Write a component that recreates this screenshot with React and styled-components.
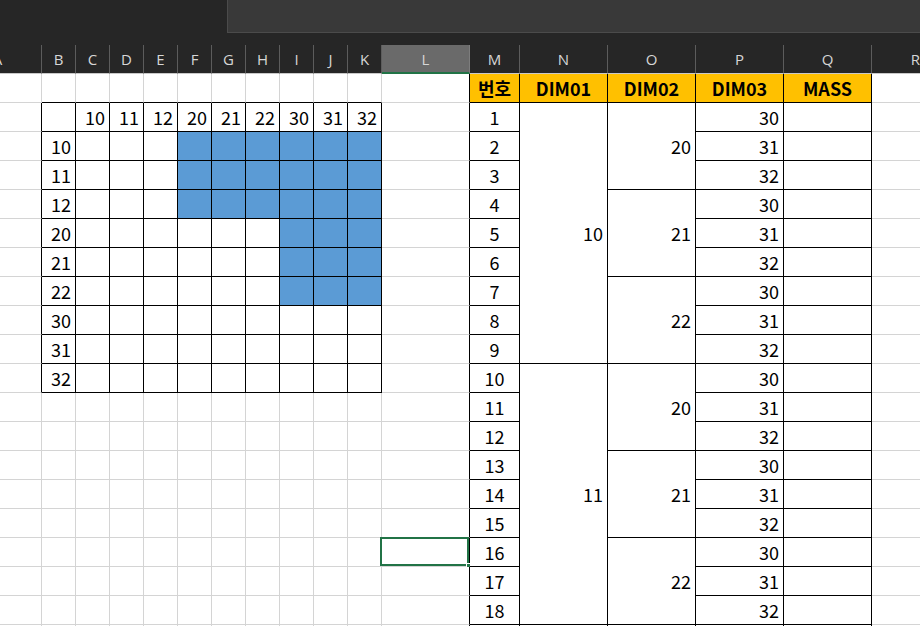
import React from 'react'
import styled, { createGlobalStyle } from 'styled-components'

const COLS = [88, ...Array(10).fill(34), 88, 50, 88, 88, 88, 88, 88]
const LETTERS = 'ABCDEFGHIJKLMNOPQR'.split('')
const AXIS = [10, 11, 12, 20, 21, 22, 30, 31, 32]
const ROWS = 20
const DATA_COUNT = 18
const ACTIVE_COL = 11
const ACTIVE_ROW = 17
const template = COLS.map(w => `${w}px`).join(' ')

const inLeft = (r, c) => r >= 2 && r <= 11 && c >= 1 && c <= 10
const inRight = (r, c) => r >= 1 && r <= ROWS && c >= 12 && c <= 16
const boxed = (r, c) => inLeft(r, c) || inRight(r, c)

const isBlue = (r, c) =>
    (r >= 3 && r <= 5 && c >= 5 && c <= 10) ||
    (r >= 6 && r <= 8 && c >= 8 && c <= 10)

// what one sheet cell holds
function cellAt(r, c) {
    if (inLeft(r, c)) {
        if (r === 2 && c >= 2) return { text: AXIS[c - 2], align: 'end' }
        if (c === 1 && r >= 3) return { text: AXIS[r - 3], align: 'end' }
        return { bg: isBlue(r, c) ? '#5b9bd5' : null }
    }
    if (inRight(r, c)) {
        if (r === 1) {
            return { text: ['번호', 'DIM01', 'DIM02', 'DIM03', 'MASS'][c - 12], align: 'center', bold: true, bg: '#ffc000' }
        }
        const i = r - 2
        // the row under the last one only peeks in at the bottom edge
        if (i >= DATA_COUNT) return {}
        if (c === 12) return { text: i + 1, align: 'center' }
        if (c === 13) {
            if (i % 9 !== 0) return { skip: true }
            return { text: 10 + Math.floor(i / 9), align: 'end', span: 9 }
        }
        if (c === 14) {
            if (i % 3 !== 0) return { skip: true }
            return { text: 20 + (Math.floor(i / 3) % 3), align: 'end', span: 3 }
        }
        if (c === 15) return { text: 30 + (i % 3), align: 'end' }
        return {}
    }
    return {}
}

function App() {
    const cells = []
    for (let r = 1; r <= ROWS; r++) {
        for (let c = 0; c < COLS.length; c++) {
            const cell = cellAt(r, c)
            if (cell.skip) continue
            const span = cell.span || 1
            const right = boxed(r, c) || boxed(r, c + 1)
            const bottom = boxed(r + span - 1, c) || boxed(r + span, c)
            const selected = r === ACTIVE_ROW && c === ACTIVE_COL
            cells.push(
                <Cell
                    key={`${r}-${c}`}
                    $span={span}
                    $right={right}
                    $bottom={bottom}
                    $bg={cell.bg}
                    $align={cell.align}
                    $bold={cell.bold}
                >
                    {cell.text}
                    {selected && (
                        <>
                            <Selection />
                            <Handle />
                        </>
                    )}
                </Cell>
            )
        }
    }

    return (
        <Window>
            <GlobalStyle />
            <TopBar>
                <NameArea />
                <FormulaBox />
            </TopBar>
            <HeaderStrip>
                <ColumnHeaders>
                    {LETTERS.map((letter, index) => (
                        <HeaderCell key={letter} $active={index === ACTIVE_COL}>
                            {letter}
                        </HeaderCell>
                    ))}
                </ColumnHeaders>
            </HeaderStrip>
            <Sheet>{cells}</Sheet>
        </Window>
    )
}

export default App

const GlobalStyle = createGlobalStyle`
    html, body {
        margin: 0;
        padding: 0;
        background: #ffffff;
        overflow: hidden;
    }
    * {
        box-sizing: border-box;
    }
`

const Window = styled.div`
    width: 920px;
    height: 626px;
    overflow: hidden;
    background: #ffffff;
    display: flex;
    flex-direction: column;
`

const TopBar = styled.div`
    height: 33px;
    display: flex;
    background: #262626;
    flex-shrink: 0;
`

const NameArea = styled.div`
    width: 227px;
`

const FormulaBox = styled.div`
    flex: 1;
    background: #393939;
    border-left: 1px solid #4b4b4b;
    border-bottom: 1px solid #4b4b4b;
`

const HeaderStrip = styled.div`
    background: #262626;
    padding-top: 12px;
    flex-shrink: 0;
`

const ColumnHeaders = styled.div`
    display: grid;
    grid-template-columns: ${template};
    margin-left: -46px;
`

const HeaderCell = styled.div`
    height: 29px;
    display: flex;
    align-items: center;
    justify-content: center;
    font-family: "Open Sans", "Liberation Sans", sans-serif;
    font-size: 15px;
    color: #d6d6d6;
    background: ${p => (p.$active ? '#6a6a6a' : '#262626')};
    border-right: 1px solid ${p => (p.$active ? '#7d7d7d' : '#5c5c5c')};
    border-bottom: ${p => (p.$active ? '2px solid #217346' : '1px solid #c9c9c9')};
`

const Sheet = styled.div`
    display: grid;
    grid-template-columns: ${template};
    grid-auto-rows: 29px;
    margin-left: -46px;
`

const Cell = styled.div`
    position: relative;
    grid-row: span ${p => p.$span};
    display: flex;
    align-items: center;
    justify-content: ${p => (p.$align === 'center' ? 'center' : 'flex-end')};
    padding-right: ${p => (p.$align === 'center' ? '0' : '4px')};
    padding-bottom: 1px;
    background: ${p => p.$bg || '#ffffff'};
    border-right: 1px solid ${p => (p.$right ? '#000000' : '#d4d4d4')};
    border-bottom: 1px solid ${p => (p.$bottom ? '#000000' : '#d4d4d4')};
    font-family: "Noto Sans CJK KR", "Noto Sans", sans-serif;
    font-size: 18px;
    font-weight: ${p => (p.$bold ? 700 : 400)};
    color: #000000;
    white-space: nowrap;
`

const Selection = styled.div`
    position: absolute;
    top: -1px;
    left: -2px;
    right: 0;
    bottom: 0;
    border: 2px solid #217346;
    pointer-events: none;
`

const Handle = styled.div`
    position: absolute;
    right: -3px;
    bottom: -3px;
    width: 6px;
    height: 6px;
    background: #217346;
    border: 1px solid #ffffff;
`
